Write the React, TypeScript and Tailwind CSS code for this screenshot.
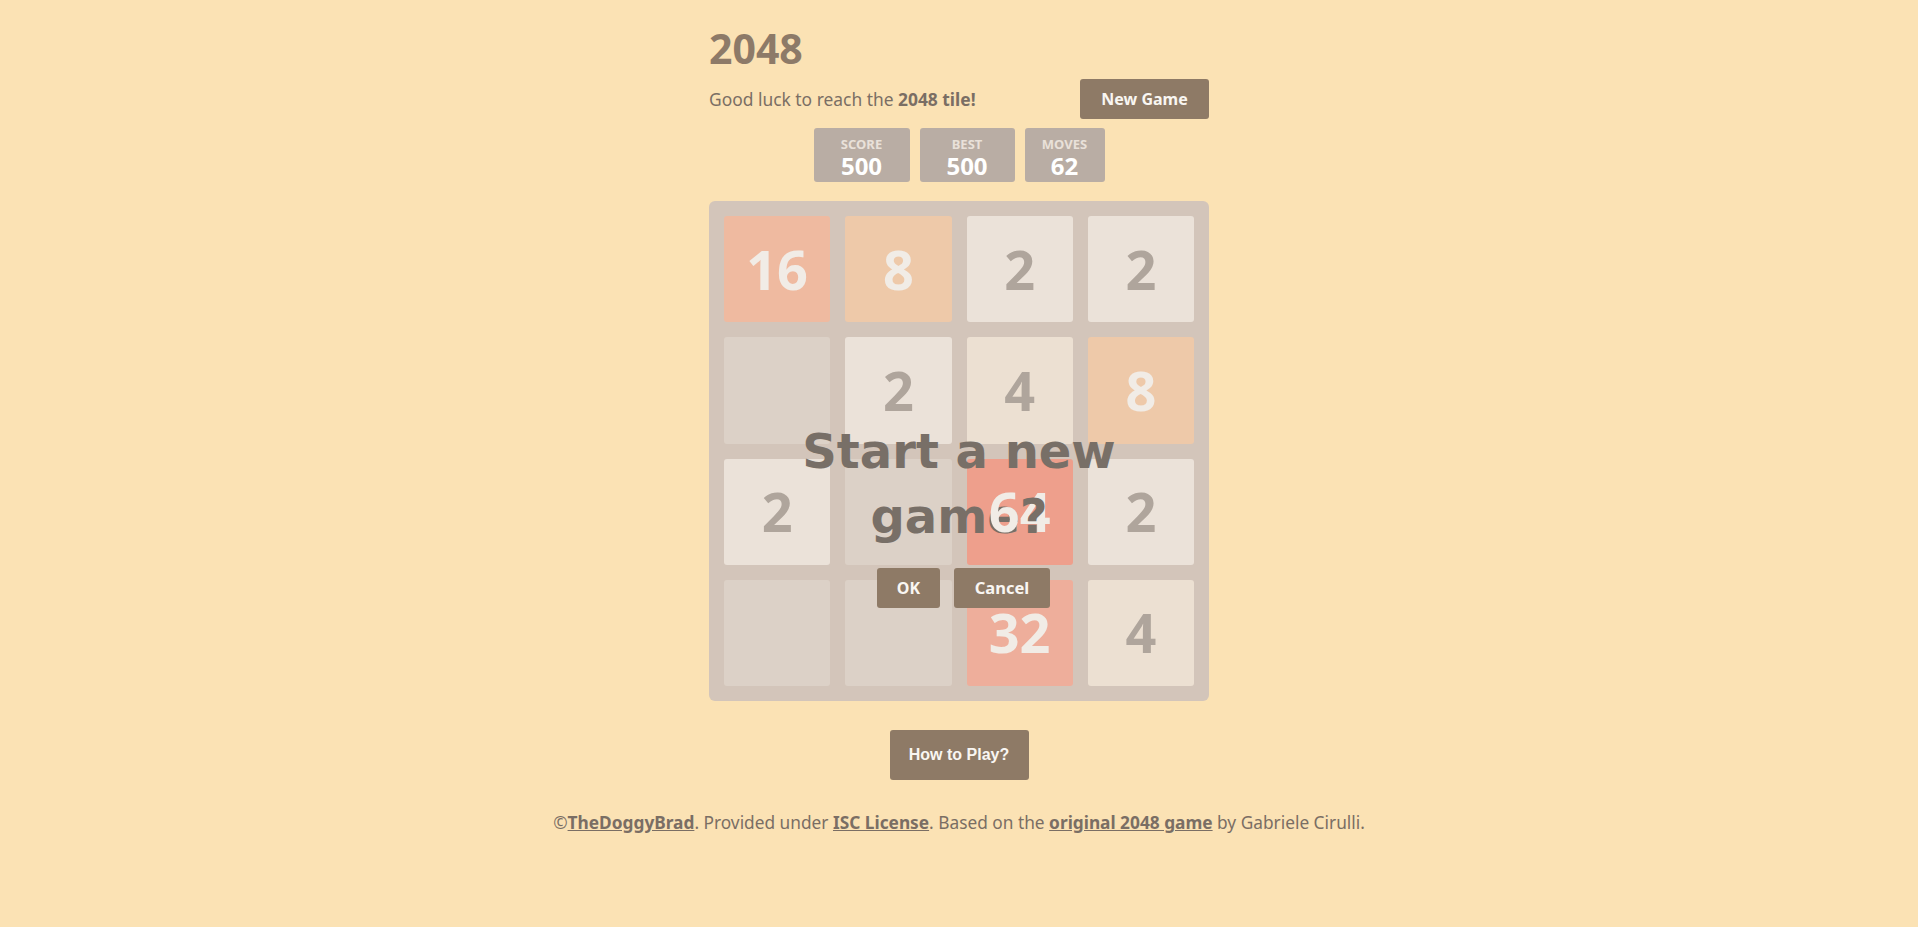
import React from "react";

const board: (number | null)[][] = [
  [16, 8, 2, 2],
  [null, 2, 4, 8],
  [2, null, 64, 2],
  [null, null, 32, 4],
];

function tileClass(v: number | null): string {
  switch (v) {
    case 2:
      return "bg-[#ebe2d9] text-[#afa59c]";
    case 4:
      return "bg-[#ece0d2] text-[#afa59c]";
    case 8:
      return "bg-[#eec9a9] text-[#f1ece6]";
    case 16:
      return "bg-[#efbaa0] text-[#f1ece6]";
    case 32:
      return "bg-[#eeae9b] text-[#f1ece6]";
    case 64:
      return "bg-[#ee9f8c] text-[#f1ece6]";
    default:
      return "bg-[#dcd1c7]";
  }
}

function ScoreBox({ label, value, w }: { label: string; value: string; w: string }) {
  return (
    <div className={`${w} pt-[8px] pb-[2px] bg-[#b9ada4] rounded-[3px] flex flex-col items-center`}>
      <div className="text-[13px] leading-[16px] font-bold text-[#e9e1d9] uppercase">{label}</div>
      <div className="text-[24px] leading-[28px] font-bold text-white">{value}</div>
    </div>
  );
}

export default function App() {
  return (
    <div
      className="min-h-screen w-full bg-[#fbe2b4] text-[#776e65]"
      style={{ fontFamily: '"Noto Sans", "Open Sans", sans-serif' }}
    >
      <div className="w-[500px] mx-auto pt-[24px]">
        <h1 className="text-[41px] leading-[48px] font-bold text-[#8d7a68]">2048</h1>
        <div className="mt-[7px] flex items-center justify-between h-[40px]">
          <p className="text-[17.4px] text-[#7a6e64]">
            Good luck to reach the <b className="font-bold">2048 tile!</b>
          </p>
          <button className="h-[40px] w-[129px] bg-[#8e7a66] rounded-[3px] text-[16px] font-bold text-[#f9f6f2]">
            New Game
          </button>
        </div>
        <div className="mt-[9px] flex justify-center gap-[10px]">
          <ScoreBox label="Score" value="500" w="w-[96px]" />
          <ScoreBox label="Best" value="500" w="w-[95px]" />
          <ScoreBox label="Moves" value="62" w="w-[80px]" />
        </div>

        <div className="relative mt-[19px] bg-[#d3c5ba] rounded-[6px] p-[15px] grid grid-cols-4 gap-[15px]">
          {board.flat().map((v, i) => (
            <div
              key={i}
              className={`h-[106.25px] rounded-[3px] flex items-center justify-center text-[54px] font-bold ${tileClass(v)}`}
            >
              {v === 64 ? (
                <span>
                  <span className="relative z-20">6</span>
                  <span>4</span>
                </span>
              ) : (
                v !== null && <span>{v}</span>
              )}
            </div>
          ))}
          <div className="absolute inset-0 z-10 flex flex-col items-center pt-[218px]">
            <div
              className="text-[48px] leading-[65px] font-bold text-[#786f67] text-center w-[340px]"
              style={{ fontFamily: '"DejaVu Sans", "Noto Sans", sans-serif' }}
            >
              Start a new game?
            </div>
            <div className="mt-[19px] flex gap-[14px] ml-[9px]">
              <button className="h-[40px] w-[63px] bg-[#8e7a66] rounded-[3px] text-[16px] font-bold text-[#f9f6f2]">
                OK
              </button>
              <button className="h-[40px] w-[96px] bg-[#8e7a66] rounded-[3px] text-[16.5px] font-bold text-[#f9f6f2]">
                Cancel
              </button>
            </div>
          </div>
        </div>

        <div className="mt-[29px] flex justify-center">
          <button
            className="h-[50px] w-[139px] bg-[#8e7a66] rounded-[3px] text-[16px] font-bold text-[#f9f6f2]"
            style={{ fontFamily: '"Liberation Sans", Arial, sans-serif' }}
          >
            How to Play?
          </button>
        </div>
      </div>
      <p className="mt-[31px] text-center text-[17.3px] leading-[24px] text-[#7a6e64]">
        ©<a className="font-bold underline">TheDoggyBrad</a>. Provided under{" "}
        <a className="font-bold underline">ISC License</a>. Based on the{" "}
        <a className="font-bold underline">original 2048 game</a> by Gabriele Cirulli.
      </p>
    </div>
  );
}
